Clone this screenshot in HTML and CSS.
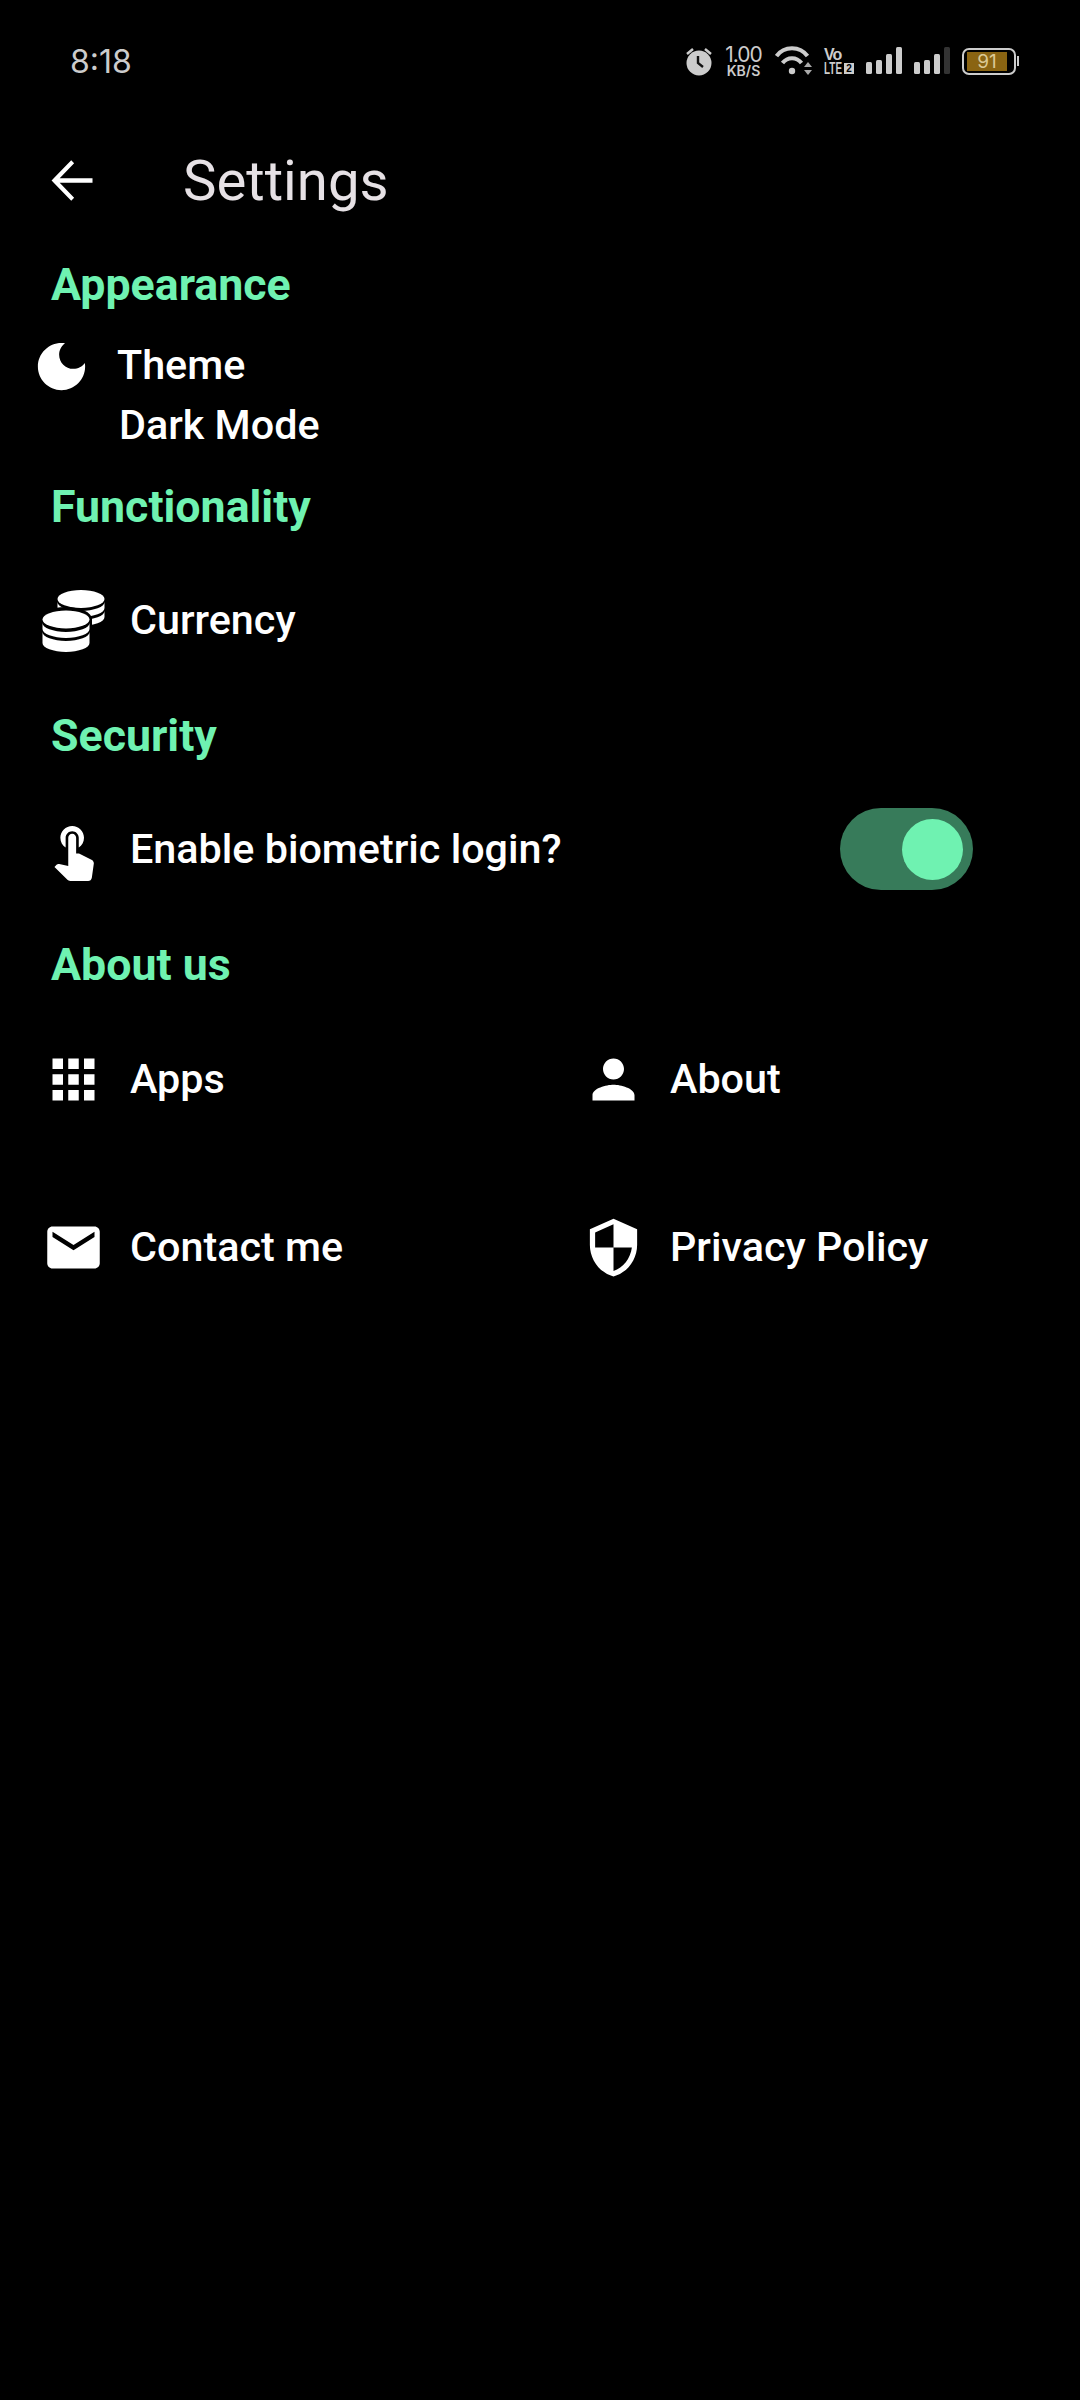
FILE: index.html

```html
<!DOCTYPE html>
<html lang="en">
<head>
  <meta charset="UTF-8">
  <meta name="viewport" content="width=device-width, initial-scale=1.0">
  <title>Settings</title>
  <link rel="stylesheet" href="styles.css">
</head>
<body>
  <!-- Status bar -->
  <div class="status-bar">
    <span class="time">8:18</span>
    <div class="status-icons">
      <svg width="26" height="30" viewBox="0 0 26 30">
        <path d="M1 8 L7 3 M25 8 L19 3" stroke="#ccc" stroke-width="2.5" fill="none"/>
        <circle cx="13" cy="17" r="12.5" fill="#ccc"/>
        <path d="M12 10 V17 L17 21" stroke="#111" stroke-width="2.4" fill="none"/>
      </svg>
      <div class="net-speed"><span class="speed-num">1.00</span><span class="speed-unit">KB/S</span></div>
      <svg width="37" height="30" viewBox="0 0 37 30">
        <path d="M1.500 10 C9 -0.500 25 -0.500 32.500 10" stroke="#ccc" stroke-width="4" fill="none"/>
        <path d="M7.500 17 C12.500 10.500 21.500 10.500 26.500 17" stroke="#ccc" stroke-width="4" fill="none"/>
        <circle cx="17" cy="25" r="3.200" fill="#ccc"/>
        <path d="M29 21 L33 16 L37 21 Z" fill="#aaa"/>
        <path d="M29 24 L37 24 L33 29 Z" fill="#aaa"/>
      </svg>
      <div class="volte">
        <span class="volte-top">Vo</span>
        <div class="volte-bottom"><span class="volte-lte">LTE</span><span class="sim-no">2</span></div>
      </div>
      <svg width="36" height="28" viewBox="0 0 36 28">
        <rect x="0" y="15" width="6" height="12" rx="1.500" fill="#ccc"/>
        <rect x="10" y="13" width="6" height="14" rx="1.500" fill="#ccc"/>
        <rect x="20" y="7" width="6" height="20" rx="1.500" fill="#ccc"/>
        <rect x="30" y="0" width="6" height="27" rx="1.500" fill="#ccc"/>
      </svg>
      <svg width="36" height="28" viewBox="0 0 36 28">
        <rect x="0" y="15" width="6" height="12" rx="1.500" fill="#ccc"/>
        <rect x="10" y="13" width="6" height="14" rx="1.500" fill="#ccc"/>
        <rect x="20" y="7" width="6" height="20" rx="1.500" fill="#ccc"/>
        <rect x="30" y="0" width="6" height="27" rx="1.500" fill="#333"/>
      </svg>
      <div class="battery">
        <div class="battery-body"><div class="battery-fill">91</div></div>
        <div class="battery-nub"></div>
      </div>
    </div>
  </div>

  <!-- App bar -->
  <div class="app-bar">
    <svg class="icon back-icon" viewBox="0 0 24 24"><path d="M20 11.100H7.500l5.500-5.700L11.900 4.300 4.400 12l7.500 7.700 1.100-1.100-5.500-5.700H20z"/></svg>
    <h1>Settings</h1>
  </div>

  <h2 class="section-title">Appearance</h2>
  <div class="theme-row">
    <svg class="icon" viewBox="0 0 24 24"><path d="M12 3c-4.970 0-9 4.030-9 9s4.030 9 9 9 9-4.030 9-9c0-.460-.040-.920-.100-1.360-.980 1.370-2.580 2.260-4.400 2.260-2.980 0-5.400-2.420-5.400-5.400 0-1.810.890-3.420 2.260-4.400-.440-.060-.900-.100-1.360-.100z"/></svg>
    <div class="theme-text">
      <div>Theme</div>
      <div class="theme-value">Dark Mode</div>
    </div>
  </div>

  <h2 class="section-title">Functionality</h2>
  <div class="row">
    <svg class="icon" viewBox="0 0 63 63">
      <ellipse cx="39" cy="10" rx="23.500" ry="9" fill="#fff"/>
      <path d="M15.500 13A23.500 9 0 0 0 62.500 13V19A23.500 9 0 0 1 15.500 19Z" fill="#fff"/>
      <path d="M15.500 22A23.500 9 0 0 0 62.500 22V28A23.500 9 0 0 1 15.500 28Z" fill="#fff"/>
      <path d="M-3 30A26.500 12 0 0 1 50 30V66H-3Z" fill="#000"/>
      <ellipse cx="24" cy="30.500" rx="23.500" ry="9" fill="#fff"/>
      <path d="M.5 34A23.500 9 0 0 0 47.500 34V40A23.500 9 0 0 1 .5 40Z" fill="#fff"/>
      <path d="M.5 43A23.500 9 0 0 0 47.500 43V54A23.500 9 0 0 1 .5 54Z" fill="#fff"/>
    </svg>
    <span class="label">Currency</span>
  </div>

  <h2 class="section-title">Security</h2>
  <div class="row">
    <svg class="icon" viewBox="0 0 24 24"><path d="M9 11.240V7.500C9 6.120 10.120 5 11.500 5S14 6.120 14 7.500v3.740c1.210-.810 2-2.180 2-3.740C16 5.010 13.990 3 11.500 3S7 5.010 7 7.500c0 1.560.790 2.930 2 3.740zm9.840 4.630l-4.540-2.260c-.170-.070-.350-.110-.540-.110H13v-6c0-.830-.670-1.500-1.500-1.500S10 6.670 10 7.500v10.740l-3.430-.720c-.080-.010-.150-.030-.240-.030-.310 0-.590.130-.790.330l-.790.800 4.940 4.940c.270.270.650.440 1.060.440h6.790c.750 0 1.330-.550 1.440-1.280l.750-5.270c.010-.070.020-.140.020-.200 0-.620-.380-1.160-.910-1.380z"/></svg>
    <span class="label">Enable biometric login?</span>
    <div class="switch"><div class="switch-thumb"></div></div>
  </div>

  <h2 class="section-title">About us</h2>
  <div class="about-grid">
    <div class="row">
      <svg class="icon" viewBox="0 0 24 24"><path d="M4 8h4V4H4v4zm6 12h4v-4h-4v4zm-6 0h4v-4H4v4zm0-6h4v-4H4v4zm6 0h4v-4h-4v4zm6-10v4h4V4h-4zm-6 4h4V4h-4v4zm6 6h4v-4h-4v4zm0 6h4v-4h-4v4z"/></svg>
      <span class="label">Apps</span>
    </div>
    <div class="row">
      <svg class="icon" viewBox="0 0 24 24"><path d="M12 12c2.210 0 4-1.790 4-4s-1.790-4-4-4-4 1.790-4 4 1.790 4 4 4zm0 2c-2.670 0-8 1.340-8 4v2h16v-2c0-2.660-5.330-4-8-4z"/></svg>
      <span class="label">About</span>
    </div>
    <div class="row">
      <svg class="icon" viewBox="0 0 24 24"><path d="M20 4H4c-1.100 0-1.990.900-1.990 2L2 18c0 1.100.900 2 2 2h16c1.100 0 2-.900 2-2V6c0-1.100-.900-2-2-2zm0 4l-8 5-8-5V6l8 5 8-5v2z"/></svg>
      <span class="label">Contact me</span>
    </div>
    <div class="row">
      <svg class="icon" viewBox="0 0 24 24"><path d="M12 1L3 5v6c0 5.550 3.840 10.740 9 12 5.160-1.260 9-6.450 9-12V5l-9-4zm0 10.990h7c-.530 4.120-3.280 7.790-7 8.940V12H5V6.300l7-3.110v8.800z"/></svg>
      <span class="label">Privacy Policy</span>
    </div>
  </div>
</body>
</html>
```

FILE: styles.css

```css
/* Reset default margin and padding */
* {
  margin: 0;
  padding: 0;
  box-sizing: border-box;
}

body {
  background: #000;
  color: #fff;
  font-family: Roboto, sans-serif;
  width: 1080px;
  height: 2400px;
  overflow: hidden;
}

/* Status bar */
.status-bar {
  height: 108px;
  padding: 14px 61px 0 70px;
  display: flex;
  justify-content: space-between;
  align-items: center;
  color: #ccc;
  font-family: Inter, sans-serif;
}

.time {
  font-size: 32px;
}

.status-icons {
  display: flex;
  align-items: center;
  gap: 12px;
}

.net-speed {
  display: flex;
  flex-direction: column;
  align-items: center;
  width: 39px;
}

.speed-num {
  font-size: 21px;
  line-height: 19px;
  letter-spacing: -1px;
}

.speed-unit {
  font-size: 14px;
  line-height: 13px;
  font-weight: 600;
}

.volte {
  width: 30px;
  display: flex;
  flex-direction: column;
  font-family: "Liberation Sans", sans-serif;
  font-weight: 700;
}

.volte-top {
  font-size: 16px;
  line-height: 15px;
  letter-spacing: -1px;
}

.volte-bottom {
  height: 14px;
  display: flex;
  align-items: center;
  justify-content: space-between;
}

.volte-lte {
  font-size: 16px;
  line-height: 14px;
  transform: scaleX(0.62);
  transform-origin: left center;
  width: 19px;
  white-space: nowrap;
}

.sim-no {
  background: #ccc;
  color: #000;
  font-size: 10px;
  line-height: 11px;
  width: 10px;
  text-align: center;
}

.battery {
  display: flex;
  align-items: center;
  gap: 1px;
}

.battery-body {
  width: 54px;
  height: 27px;
  border: 2px solid #ccc;
  border-radius: 7px;
  padding: 2px 7px 2px 3px;
}

.battery-fill {
  height: 100%;
  background: #8a6412;
  color: #dcc995;
  font-size: 19px;
  line-height: 19px;
  text-align: center;
}

.battery-nub {
  width: 2px;
  height: 10px;
  background: #ccc;
}

/* App bar */
.app-bar {
  height: 147px;
  padding: 0 0 2px 40px;
  display: flex;
  align-items: center;
  color: #e6e1e5;
}

.app-bar h1 {
  font-size: 56.300px;
  font-weight: 400;
  margin-left: 80px;
}

.back-icon {
  fill: #e6e1e5;
}

/* Sections */
.section-title {
  height: 57px;
  line-height: 60px;
  padding-left: 51px;
  font-size: 44.700px;
  font-weight: 700;
  color: #6ff2b1;
}

.icon {
  width: 63px;
  height: 63px;
  flex-shrink: 0;
  fill: #fff;
}

.row {
  height: 172px;
  padding: 0 42px;
  display: flex;
  align-items: center;
  gap: 25px;
}

.label {
  font-size: 41.300px;
  font-weight: 500;
}

.theme-row {
  padding: 23px 0 22px 30px;
  display: flex;
  align-items: flex-start;
  gap: 24px;
}

.theme-text {
  font-size: 41.300px;
  font-weight: 500;
  line-height: 60px;
}

.theme-value {
  margin-left: 2px;
}

.switch {
  width: 133px;
  height: 82px;
  margin: 0 65px 0 auto;
  padding: 0 10px;
  border-radius: 41px;
  background: #377b5a;
  display: flex;
  align-items: center;
  justify-content: flex-end;
}

.switch-thumb {
  width: 61px;
  height: 61px;
  border-radius: 50%;
  background: #6ff2b1;
}

.about-grid {
  display: grid;
  grid-template-columns: 540px 540px;
  grid-auto-rows: 168px;
  padding-top: 3px;
}

.about-grid .row {
  height: 168px;
}
```
